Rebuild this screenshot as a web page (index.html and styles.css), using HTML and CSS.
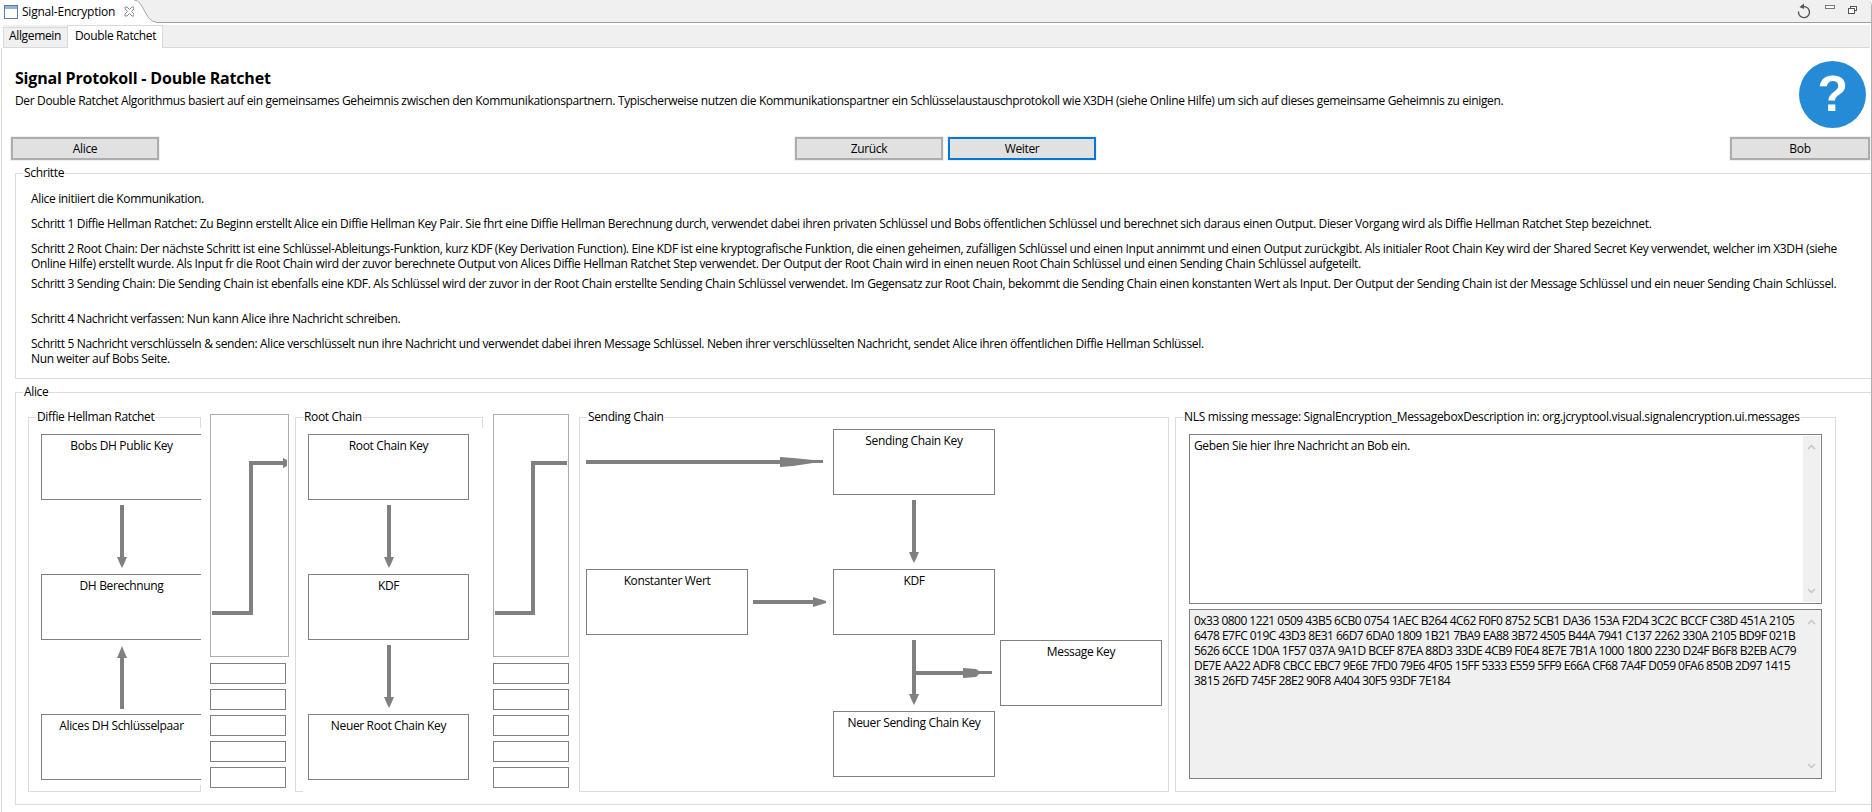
FILE: index.html

```html
<!DOCTYPE html>
<html>
  <head>
    <meta charset="utf-8">
    <title>Signal-Encryption</title>
    <link rel="stylesheet" href="styles.css">
  </head>
  <body>
    <div id="editor">
      <div id="editor-bar">
        <div class="editor-tab">
          <svg class="tab-icon" width="14" height="14" viewBox="0 0 14 14">
            <rect x="0.5" y="0.5" width="13" height="13" fill="#fff" stroke="#5a7ea8"/>
            <rect x="1" y="1" width="12" height="3" fill="#8db4dc"/>
          </svg>
          <span class="tab-name">Signal-Encryption</span>
          <svg class="tab-close" width="11" height="11" viewBox="0 0 11 11">
            <path d="M1 1h2l2.500 2.500L8 1h2v2L7.500 5.500 10 8v2H8L5.500 7.500 3 10H1V8l2.500-2.500L1 3z" fill="#fff" stroke="#8a8a8a"/>
          </svg>
        </div>
        <svg class="tab-curve" width="22" height="23" viewBox="0 0 22 23">
          <path d="M0 0C10 0 11 22 22 22V23H0z" fill="#fff"/>
          <path d="M0 0C10 0 11 22 22 22" fill="none" stroke="#a8a8a8"/>
        </svg>
        <div class="editor-tools">
          <svg width="16" height="16" viewBox="0 0 16 16">
            <path d="M5 4.500A5.500 5.500 0 1 1 2.500 8.500" fill="none" stroke="#555" stroke-width="1.400"/>
            <path d="M8 0.500V6L3.500 4z" fill="#555"/>
          </svg>
          <svg class="tool-min" width="10" height="5" viewBox="0 0 10 5">
            <rect x="0.500" y="0.500" width="9" height="3" fill="#fff" stroke="#777"/>
          </svg>
          <svg class="tool-max" width="9" height="8" viewBox="0 0 9 8">
            <rect x="2.500" y="0.500" width="6" height="4" fill="#fff" stroke="#555"/>
            <rect x="0.500" y="2.500" width="6" height="5" fill="#fff" stroke="#555"/>
          </svg>
        </div>
      </div>

      <div id="tabs">
        <div class="tab">Allgemein</div>
        <div class="tab tab-active">Double Ratchet</div>
      </div>

      <div id="page">
        <div id="intro">
          <div class="intro-text">
            <h1 id="titulo">Signal Protokoll - Double Ratchet</h1>
            <p class="descricao">Der Double Ratchet Algorithmus basiert auf ein gemeinsames Geheimnis zwischen den Kommunikationspartnern. Typischerweise nutzen die Kommunikationspartner ein Schlüsselaustauschprotokoll wie X3DH (siehe Online Hilfe) um sich auf dieses gemeinsame Geheimnis zu einigen.</p>
          </div>
          <div class="help-icon">?</div>
        </div>

        <div id="nav">
          <button class="btn btn-alice">Alice</button>
          <div class="nav-center">
            <button class="btn">Zurück</button>
            <button class="btn btn-focus">Weiter</button>
          </div>
          <button class="btn btn-bob">Bob</button>
        </div>

        <fieldset id="schritte">
          <legend>Schritte</legend>
          <p class="step">Alice initiiert die Kommunikation.</p>
          <p class="step step-gap">Schritt 1 Diffie Hellman Ratchet: Zu Beginn erstellt Alice ein Diffie Hellman Key Pair. Sie fhrt eine Diffie Hellman Berechnung durch, verwendet dabei ihren privaten Schlüssel und Bobs öffentlichen Schlüssel und berechnet sich daraus einen Output. Dieser Vorgang wird als Diffie Hellman Ratchet Step bezeichnet.</p>
          <p class="step step-gap">Schritt 2 Root Chain: Der nächste Schritt ist eine Schlüssel-Ableitungs-Funktion, kurz KDF (Key Derivation Function). Eine KDF ist eine kryptografische Funktion, die einen geheimen, zufälligen Schlüssel und einen Input annimmt und einen Output zurückgibt. Als initialer Root Chain Key wird der Shared Secret Key verwendet, welcher im X3DH (siehe<br>Online Hilfe) erstellt wurde. Als Input fr die Root Chain wird der zuvor berechnete Output von Alices Diffie Hellman Ratchet Step verwendet. Der Output der Root Chain wird in einen neuen Root Chain Schlüssel und einen Sending Chain Schlüssel aufgeteilt.</p>
          <p class="step step-tight">Schritt 3 Sending Chain: Die Sending Chain ist ebenfalls eine KDF. Als Schlüssel wird der zuvor in der Root Chain erstellte Sending Chain Schlüssel verwendet. Im Gegensatz zur Root Chain, bekommt die Sending Chain einen konstanten Wert als Input. Der Output der Sending Chain ist der Message Schlüssel und ein neuer Sending Chain Schlüssel.</p>
          <p class="step step-wide">Schritt 4 Nachricht verfassen: Nun kann Alice ihre Nachricht schreiben.</p>
          <p class="step step-gap">Schritt 5 Nachricht verschlüsseln &amp; senden: Alice verschlüsselt nun ihre Nachricht und verwendet dabei ihren Message Schlüssel. Neben ihrer verschlüsselten Nachricht, sendet Alice ihren öffentlichen Diffie Hellman Schlüssel.<br>Nun weiter auf Bobs Seite.</p>
        </fieldset>

        <fieldset id="alice">
          <legend>Alice</legend>
          <div id="diagrama">
            <fieldset class="grupo grupo-dh">
              <legend>Diffie Hellman Ratchet</legend>
              <div class="grupo-corpo corpo-dh">
                <div class="caixa caixa-aberta">Bobs DH Public Key</div>
                <div class="caixa caixa-aberta">DH Berechnung</div>
                <div class="caixa caixa-aberta">Alices DH Schlüsselpaar</div>
              </div>
            </fieldset>

            <div class="coluna coluna-1">
              <div class="painel"></div>
              <div class="slot"></div>
              <div class="slot"></div>
              <div class="slot"></div>
              <div class="slot"></div>
              <div class="slot"></div>
            </div>

            <fieldset class="grupo grupo-root">
              <legend>Root Chain</legend>
              <div class="grupo-corpo corpo-root">
                <div class="caixa">Root Chain Key</div>
                <div class="caixa">KDF</div>
                <div class="caixa">Neuer Root Chain Key</div>
              </div>
            </fieldset>

            <div class="coluna coluna-2">
              <div class="painel"></div>
              <div class="slot"></div>
              <div class="slot"></div>
              <div class="slot"></div>
              <div class="slot"></div>
              <div class="slot"></div>
            </div>

            <fieldset class="grupo grupo-sending">
              <legend>Sending Chain</legend>
              <div class="sending-canvas">
                <div class="caixa no-chain">Sending Chain Key</div>
                <div class="caixa no-const">Konstanter Wert</div>
                <div class="caixa no-kdf">KDF</div>
                <div class="caixa no-message">Message Key</div>
                <div class="caixa no-new">Neuer Sending Chain Key</div>
              </div>
            </fieldset>

            <fieldset class="grupo grupo-msg">
              <legend>NLS missing message: SignalEncryption_MessageboxDescription in: org.jcryptool.visual.signalencryption.ui.messages</legend>
              <div class="texto-box">
                <div class="texto">Geben Sie hier Ihre Nachricht an Bob ein.</div>
                <div class="scroll">
                  <svg width="9" height="6" viewBox="0 0 9 6"><path d="M1 5L4.500 1.500 8 5" fill="none" stroke="#c4c4c4" stroke-width="1.500"/></svg>
                  <svg width="9" height="6" viewBox="0 0 9 6"><path d="M1 1L4.500 4.500 8 1" fill="none" stroke="#c4c4c4" stroke-width="1.500"/></svg>
                </div>
              </div>
              <div class="texto-box texto-box-cinza">
                <div class="texto">0x33 0800 1221 0509 43B5 6CB0 0754 1AEC B264 4C62 F0F0 8752 5CB1 DA36 153A F2D4 3C2C BCCF C38D 451A 2105<br>6478 E7FC 019C 43D3 8E31 66D7 6DA0 1809 1B21 7BA9 EA88 3B72 4505 B44A 7941 C137 2262 330A 2105 BD9F 021B<br>5626 6CCE 1D0A 1F57 037A 9A1D BCEF 87EA 88D3 33DE 4CB9 F0E4 8E7E 7B1A 1000 1800 2230 D24F B6F8 B2EB AC79<br>DE7E AA22 ADF8 CBCC EBC7 9E6E 7FD0 79E6 4F05 15FF 5333 E559 5FF9 E66A CF68 7A4F D059 0FA6 850B 2D97 1415<br>3815 26FD 745F 28E2 90F8 A404 30F5 93DF 7E184</div>
                <div class="scroll">
                  <svg width="9" height="6" viewBox="0 0 9 6"><path d="M1 5L4.500 1.500 8 5" fill="none" stroke="#c4c4c4" stroke-width="1.500"/></svg>
                  <svg width="9" height="6" viewBox="0 0 9 6"><path d="M1 1L4.500 4.500 8 1" fill="none" stroke="#c4c4c4" stroke-width="1.500"/></svg>
                </div>
              </div>
            </fieldset>
          </div>
        </fieldset>
      </div>

      <!-- setas do diagrama, em coordenadas da pagina -->
      <svg id="setas" width="1872" height="812" viewBox="0 0 1872 812">
        <g fill="none" stroke="#808080" stroke-width="4">
          <path d="M122 505V558"/>
          <path d="M122 709V657"/>
          <path d="M389 505V558"/>
          <path d="M389 645V698"/>
          <path d="M212 613H251V463H284"/>
          <path d="M495 613H533V463H567"/>
          <path d="M586 462H782"/>
          <path d="M753 602H814"/>
          <path d="M914 500V553"/>
          <path d="M914 640V695"/>
          <path d="M914 673H965"/>
        </g>
        <g fill="#808080">
          <path d="M117 557H127L124 564 122 568 120 564z"/>
          <path d="M117 658H127L124 651 122 646 120 651z"/>
          <path d="M384 557H394L391 564 389 568 387 564z"/>
          <path d="M384 697H394L391 704 389 708 387 704z"/>
          <path d="M283 458L287 460V466L283 468z"/>
          <path d="M780 457L793 458 813 460H823V463H813L793 466 780 467z"/>
          <path d="M813 597L826 601V603L813 607z"/>
          <path d="M909 552H919L916 559 914 563 912 559z"/>
          <path d="M909 694H919L916 701 914 705 912 701z"/>
          <path d="M963 668L976 669 979 671H992V674H979L976 677 963 678z"/>
        </g>
      </svg>
    </div>
  </body>
</html>
```

FILE: styles.css

```css
* {
  box-sizing: border-box;
}

html, body {
  margin: 0;
  padding: 0;
  background: #fff;
}

body {
  font-family: "Open Sans", "Noto Sans", Arial, sans-serif;
  font-size: 12px;
  line-height: 15px;
  letter-spacing: -0.35px;
  color: #000;
}

#editor {
  position: relative;
  width: 1872px;
  height: 812px;
  overflow: hidden;
  border-right: 1px solid #b0b0b0;
  border-top-right-radius: 6px;
}

/* barra do editor */
#editor-bar {
  display: flex;
  height: 23px;
  background: #f0f0f0;
  border-bottom: 1px solid #a0a0a0;
}

.editor-tab {
  display: flex;
  align-items: center;
  flex: none;
  width: 134px;
  height: 23px;
  padding-left: 4px;
  background: #fff;
}

.tab-name {
  flex: none;
  margin-left: 4px;
  white-space: nowrap;
  letter-spacing: -0.22px;
}

.tab-close {
  flex: none;
  margin-left: 9px;
}

.tab-icon {
  flex: none;
}

.tab-curve {
  flex: none;
  margin-right: auto;
}

.editor-tools {
  display: flex;
  align-items: center;
  gap: 13px;
  padding-right: 14px;
}

.tool-min {
  margin-top: -8px;
}

.tool-max {
  margin-top: -3px;
}

/* abas */
#tabs {
  display: flex;
  align-items: flex-end;
  height: 23px;
  margin: 2px 1px 0 3px;
  background: #f0f0f0;
  border-bottom: 1px solid #d9d9d9;
}

.tab {
  width: 64px;
  height: 20px;
  padding-left: 5px;
  border-left: 1px solid #d9d9d9;
  border-top: 1px solid #d9d9d9;
}

.tab-active {
  width: 96px;
  height: 23px;
  margin-bottom: -1px;
  padding: 2px 0 0 7px;
  background: #fff;
  border: 1px solid #d9d9d9;
  border-bottom: 0;
}

#page {
  height: 765px;
  margin-left: 1px;
  border-left: 1px solid #d9d9d9;
}

/* cabecalho */
#intro {
  display: flex;
  justify-content: space-between;
  height: 89px;
  padding: 13px 5px 0 13px;
}

#titulo {
  margin: 6px 0 4px;
  font-size: 16px;
  line-height: 22px;
  font-weight: 700;
  letter-spacing: -0.2px;
}

.descricao {
  margin: 0;
  white-space: nowrap;
}

.help-icon {
  flex: none;
  width: 67px;
  height: 67px;
  border-radius: 50%;
  background: #268bd6;
  color: #fff;
  font-family: "Liberation Sans", Arial, sans-serif;
  font-size: 50px;
  font-weight: 700;
  line-height: 67px;
  text-align: center;
}

/* botoes */
#nav {
  display: flex;
  padding: 0 1px 0 9px;
}

.btn {
  width: 148px;
  height: 23px;
  padding: 0;
  background: #e1e1e1;
  border: 2px solid #adadad;
  outline: 1px solid #f0f0f0;
  font-family: inherit;
  font-size: 12px;
  letter-spacing: inherit;
  color: #000;
}

.btn-focus {
  border-color: #0078d7;
}

.nav-center {
  display: flex;
  gap: 5px;
  margin-left: 636px;
}

.btn-bob {
  width: 140px;
  margin-left: auto;
}

/* grupos */
fieldset {
  margin: 0;
  padding: 0;
  min-width: 0;
  border: 1px solid #dcdcdc;
}

legend {
  margin-left: 7px;
  padding: 0 1px;
  height: 16px;
  line-height: 16px;
  white-space: nowrap;
}

#schritte {
  margin: 5px 0 0 13px;
  height: 214px;
  padding: 10px 0 0 15px;
  border-right: 0;
}

#schritte > legend {
  margin-left: -8px;
}

.step {
  margin: 0;
  white-space: nowrap;
}

.step-gap {
  margin-top: 10px;
}

.step-tight {
  margin-top: 5px;
}

.step-wide {
  margin-top: 20px;
}

#alice {
  margin: 5px 0 0 13px;
  height: 421px;
  padding: 9px 0 0 12px;
  border-right: 0;
}

#alice > legend {
  margin-left: -5px;
}

#diagrama {
  display: flex;
  align-items: flex-start;
}

.grupo {
  flex: none;
  height: 383px;
}

.grupo-dh {
  width: 173px;
  padding-top: 3px;
}

.grupo-root {
  width: 188px;
  margin-left: 6px;
  padding-top: 3px;
}

.grupo-sending {
  width: 590px;
  margin-left: 10px;
}

.grupo-msg {
  width: 661px;
  margin-left: 6px;
  padding: 9px 0 0 13px;
}

.grupo-msg > legend {
  margin-left: -6px;
  letter-spacing: -0.31px;
}

.grupo-corpo {
  display: flex;
  flex-direction: column;
  gap: 74px;
  background: #fff;
}

.corpo-dh {
  height: 357px;
  margin-right: -1px;
  padding: 6px 0 0 12px;
}

.corpo-root {
  height: 365px;
  margin: 0 -1px 0 7px;
  padding: 6px 14px 0 5px;
}

.caixa {
  height: 66px;
  padding-top: 3px;
  border: 1px solid #808080;
  background: #fff;
  text-align: center;
}

.caixa-aberta {
  border-right: 0;
}

.coluna {
  flex: none;
  display: flex;
  flex-direction: column;
  gap: 5px;
  width: 79px;
  margin-top: 5px;
  margin-left: 9px;
}

.coluna-2 {
  width: 76px;
  margin-left: 10px;
}

.painel {
  height: 243px;
  margin-bottom: 1px;
  border: 1px solid #adadad;
}

.slot {
  width: 76px;
  height: 21px;
  border: 1px solid #808080;
}

/* nos do sending chain */
.sending-canvas {
  position: relative;
  height: 355px;
}

.sending-canvas .caixa {
  position: absolute;
  width: 162px;
}

.no-chain {
  left: 253px;
  top: 4px;
}

.no-const {
  left: 6px;
  top: 144px;
}

.no-kdf {
  left: 253px;
  top: 144px;
}

.no-message {
  left: 420px;
  top: 215px;
}

.no-new {
  left: 253px;
  top: 286px;
}

/* caixas de texto */
.texto-box {
  display: flex;
  width: 633px;
  height: 170px;
  margin-bottom: 5px;
  border: 1px solid #808080;
  background: #fff;
}

.texto-box-cinza {
  background: #f0f0f0;
  letter-spacing: -0.52px;
}

.texto {
  flex: 1;
  min-width: 0;
  padding: 3px 0 0 4px;
  white-space: nowrap;
}

.scroll {
  flex: none;
  display: flex;
  flex-direction: column;
  justify-content: space-between;
  align-items: center;
  width: 17px;
  margin: 1px;
  padding: 8px 0;
  background: #f0f0f0;
}

#setas {
  position: absolute;
  left: 0;
  top: 0;
  pointer-events: none;
}
```
